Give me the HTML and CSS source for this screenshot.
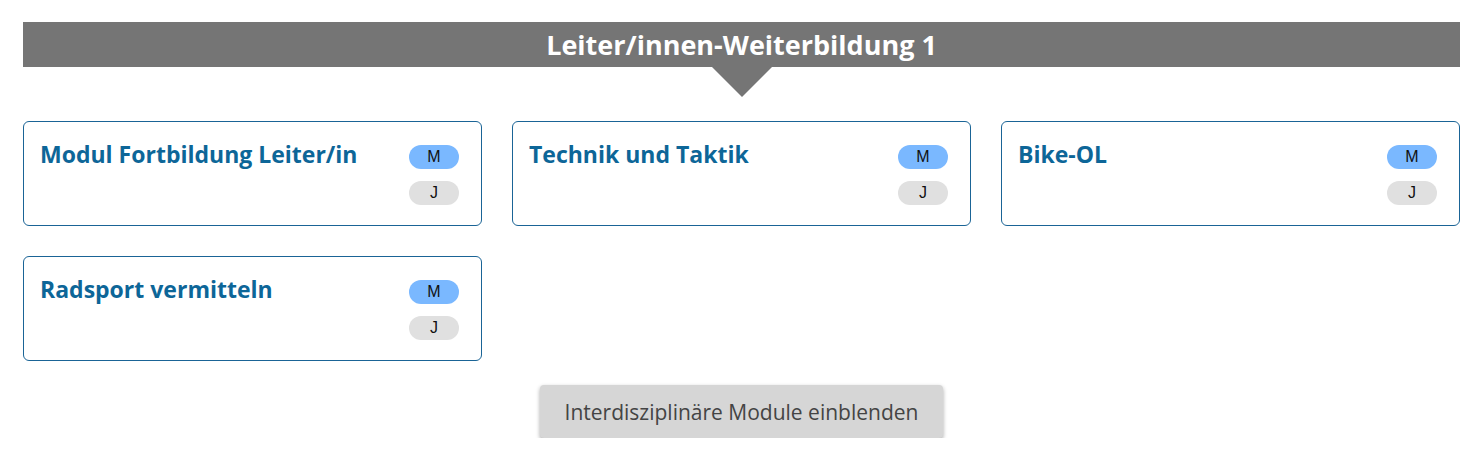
FILE: index.html
```html
<!DOCTYPE html>
<html lang="de">
<head>
<meta charset="utf-8">
<title>Leiter/innen-Weiterbildung 1</title>
<link rel="stylesheet" href="styles.css">
</head>
<body>
<div class="page">
  <div class="header">
    <h1 class="header-title">Leiter/innen-Weiterbildung 1</h1>
    <div class="header-arrow"></div>
  </div>
  <div class="grid">
    <div class="card">
      <div class="card-title">Modul Fortbildung Leiter/in</div>
      <div class="badges"><span class="badge badge-m">M</span><span class="badge badge-j">J</span></div>
    </div>
    <div class="card">
      <div class="card-title">Technik und Taktik</div>
      <div class="badges"><span class="badge badge-m">M</span><span class="badge badge-j">J</span></div>
    </div>
    <div class="card">
      <div class="card-title">Bike-OL</div>
      <div class="badges"><span class="badge badge-m">M</span><span class="badge badge-j">J</span></div>
    </div>
    <div class="card">
      <div class="card-title">Radsport vermitteln</div>
      <div class="badges"><span class="badge badge-m">M</span><span class="badge badge-j">J</span></div>
    </div>
  </div>
  <div class="actions">
    <button class="btn">Interdisziplinäre Module einblenden</button>
  </div>
</div>
</body>
</html>
```
FILE: styles.css
```css
html, body {
  margin: 0;
  padding: 0;
  background: #fff;
}
body {
  font-family: "Open Sans", "Noto Sans", sans-serif;
}
.page {
  padding: 22px 8px 0 23px;
}
.header {
  position: relative;
  background: #757575;
  height: 45px;
  display: flex;
  align-items: center;
  justify-content: center;
}
.header-title {
  margin: 0;
  color: #fff;
  font-size: 27px;
  font-weight: 700;
  line-height: 45px;
}
.header-arrow {
  position: absolute;
  left: 50%;
  top: 45px;
  margin-left: -30px;
  width: 0;
  height: 0;
  border-left: 30px solid transparent;
  border-right: 30px solid transparent;
  border-top: 30px solid #757575;
}
.grid {
  margin-top: 54px;
  display: grid;
  grid-template-columns: repeat(3, 459px);
  column-gap: 30px;
  row-gap: 30px;
}
.card {
  box-sizing: border-box;
  height: 105px;
  border: 1px solid #1a6496;
  border-radius: 6px;
  padding: 17px 22px 0 16px;
  display: flex;
  justify-content: space-between;
  align-items: flex-start;
}
.card-title {
  color: #0d6698;
  font-size: 23px;
  font-weight: 700;
  line-height: 30px;
}
.badges {
  display: flex;
  flex-direction: column;
  gap: 12px;
  margin-top: 6px;
}
.badge {
  width: 50px;
  height: 24px;
  border-radius: 12px;
  font-family: "Liberation Sans", Arial, sans-serif;
  font-size: 16px;
  line-height: 24px;
  text-align: center;
  color: #111;
}
.badge-m { background: #7ab8ff; }
.badge-j { background: #e0e0e0; }
.actions {
  display: flex;
  justify-content: center;
  margin-top: 24px;
}
.btn {
  font-family: "Open Sans", "Noto Sans", sans-serif;
  font-size: 21px;
  color: #444;
  background: #d6d6d6;
  border: none;
  border-radius: 4px;
  width: 403px;
  height: 53px;
  box-shadow: 0 2px 4px rgba(0,0,0,0.35);
  padding: 0;
}
```
